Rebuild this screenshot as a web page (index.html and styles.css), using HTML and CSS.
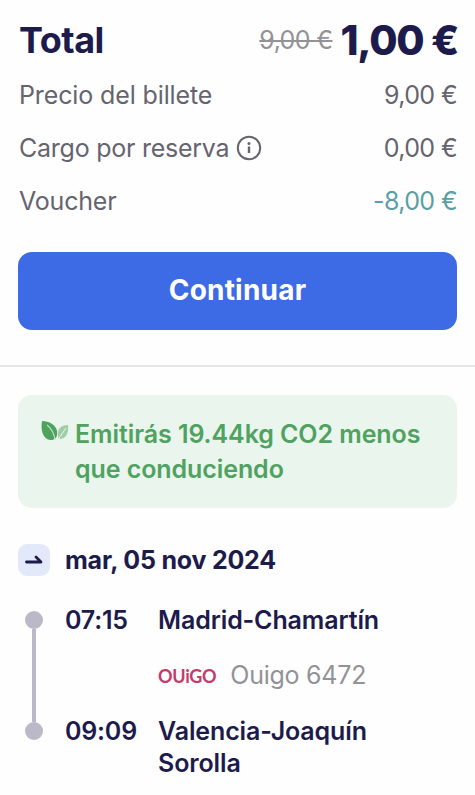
FILE: index.html
```html
<!DOCTYPE html>
<html lang="es">
<head>
<meta charset="utf-8">
<meta name="viewport" content="width=device-width, initial-scale=1">
<title>Total</title>
<link rel="stylesheet" href="styles.css">
</head>
<body>
<section class="summary">
  <div class="total">
    <h1 class="total-label">Total</h1>
    <div class="total-prices"><s class="old-price">9,00 €</s><strong class="new-price">1,00 €</strong></div>
  </div>
  <div class="row"><span class="ticket-label">Precio del billete</span><span class="amount">9,00 €</span></div>
  <div class="row">
    <span class="fee">Cargo por reserva
      <svg class="info" viewBox="0 0 26 26" fill="none" stroke="currentColor"><circle cx="13" cy="13" r="11.2" stroke-width="2"/><path d="M13 11.500v6.500" stroke-width="2.400"/><circle cx="13" cy="8.6" r="1.5" fill="currentColor" stroke="none"/></svg>
    </span>
    <span class="amount">0,00 €</span>
  </div>
  <div class="row"><span>Voucher</span><span class="amount discount">-8,00 €</span></div>
  <button class="continue">Continuar</button>
</section>
<section class="trip">
  <div class="eco">
    <svg class="leaves" viewBox="0 0 28 22"><path d="M1 1C8 1 15 5 16 11C17 17 14 20 10 20C4 20-1 13 1 1Z" fill="#4da35e"/><path d="M6 5C10 8 13 13 14 20" fill="none" stroke="#c4e2c9" stroke-width="1.1"/><path d="M27 5C21 5 17 8 17 13C17 16 17 18 18 19C25 19 28 13 27 5Z" fill="#a0cca8"/><path d="M25 8L17.500 19" fill="none" stroke="#e9f5ed" stroke-width="1"/></svg>
    <p class="eco-text">Emitirás 19.44kg CO2 menos que conduciendo</p>
  </div>
  <div class="date">
    <span class="badge"><svg viewBox="0 0 20 12" fill="none" stroke="#1c1b4b" stroke-width="2.800" stroke-linecap="round" stroke-linejoin="round"><path d="M2.500 8H17L12 3"/></svg></span>
    <h2 class="date-text">mar, 05 nov 2024</h2>
  </div>
  <div class="journey">
    <div class="track"><i class="dot"></i><i class="line"></i><i class="dot"></i></div>
    <div class="stops">
      <time class="time">07:15</time><span class="place">Madrid-Chamartín</span>
      <div class="carrier"><span class="logo">OUiGO</span><span class="train">Ouigo 6472</span></div>
      <time class="time">09:09</time><span class="place end">Valencia-Joaquín Sorolla</span>
    </div>
  </div>
</section>
</body>
</html>
```
FILE: styles.css
```css
* { box-sizing: border-box; }
body {
  margin: 0;
  background: #fefefe;
  color: #65646f;
  font: 400 25px/32px Inter, "Liberation Sans", sans-serif;
  letter-spacing: -0.2px;
}
h1, h2, p { margin: 0; }
.summary {
  height: 367px;
  padding: 15px 18px 0 19px;
  border-bottom: 2px solid #e7e7e8;
}
.total {
  display: flex;
  align-items: center;
  justify-content: space-between;
  height: 50px;
  margin-bottom: 14px;
  color: #1c1b4b;
}
.total-label { font-size: 36px; font-weight: 700; line-height: 50px; letter-spacing: -0.5px; }
.total-prices { display: flex; align-items: center; gap: 8px; margin-right: -1px; }
.old-price { color: #929297; font-weight: 400; text-decoration-thickness: 2px; letter-spacing: -0.6px; }
.new-price { font-size: 41px; font-weight: 800; line-height: 50px; letter-spacing: -1.3px; }
.row { display: flex; justify-content: space-between; height: 32px; margin-bottom: 21px; }
.ticket-label { letter-spacing: -0.12px; }
.fee { display: flex; align-items: center; gap: 7px; letter-spacing: -0.25px; }
.info { width: 26px; height: 26px; }
.amount { letter-spacing: -0.6px; }
.discount { color: #5a9fa3; }
.continue {
  display: block;
  width: 439px;
  height: 78px;
  margin: 35px 0 0 -1px;
  padding: 0 0 2px;
  border: 0;
  border-radius: 14px;
  background: #3d6be5;
  color: #fff;
  font: 700 28px/76px Inter, sans-serif;
  letter-spacing: 0.2px;
}
.trip { padding: 28px 18px 0; }
.eco {
  display: flex;
  height: 113px;
  padding: 22px 18px 0 23px;
  border-radius: 14px;
  background: #eaf5ed;
}
.leaves { flex: none; width: 28px; height: 22px; margin: 3px 6px 0 0; }
.eco-text { color: #4fa260; font-weight: 600; line-height: 35px; letter-spacing: -0.08px; }
.date { display: flex; align-items: center; height: 32px; margin-top: 36px; }
.badge {
  display: flex;
  align-items: center;
  justify-content: center;
  width: 32px;
  height: 32px;
  margin-right: 15px;
  border-radius: 9px;
  background: #e2e9fa;
}
.badge svg { width: 20px; height: 12px; }
.date-text { color: #1c1b4b; font-size: 25px; font-weight: 700; letter-spacing: -0.22px; }
.journey { display: flex; margin-top: 28px; }
.track {
  display: flex;
  flex-direction: column;
  align-items: center;
  width: 18px;
  height: 129px;
  margin: 7px 22px 0 7px;
}
.dot { flex: none; width: 18px; height: 18px; border-radius: 50%; background: #bbb9c8; }
.line { flex: 1; width: 4px; background: #bbb9c8; }
.stops {
  display: grid;
  grid-template-columns: 93px 260px;
  color: #1c1b4b;
  font-weight: 600;
}
.place { letter-spacing: -0.12px; }
.carrier {
  display: flex;
  grid-column: 2;
  height: 32px;
  gap: 14px;
  margin: 23px 0 24px;
}
.logo { color: #c43c6c; font: 700 18px/35px Lato, sans-serif; letter-spacing: -0.3px; }
.train { color: #929297; font-weight: 400; letter-spacing: -0.25px; }
```
